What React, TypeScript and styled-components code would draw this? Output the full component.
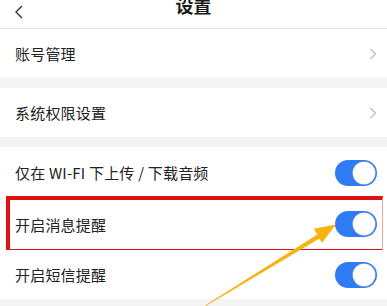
import React from "react"
import styled, { createGlobalStyle } from "styled-components"

const GlobalStyle = createGlobalStyle`
  html, body {
    margin: 0;
    padding: 0;
    background: #f4f4f4;
  }
  body {
    font-family: "Noto Sans CJK SC", "Noto Sans", sans-serif;
    overflow: hidden;
  }
`

const Page = styled.div`
  width: 387px;
  height: 306px;
  position: relative;
  overflow: hidden;
  background: #f4f4f4;
`

const Header = styled.div`
  height: 28px;
  background: #fff;
  border-bottom: 1px solid #e6e6e6;
  display: flex;
  justify-content: center;
  align-items: flex-start;
  position: relative;
`

const BackBtn = styled.div`
  position: absolute;
  left: 13px;
  top: 0;
  width: 14px;
  height: 14px;
`

const Title = styled.div`
  margin-top: -5px;
  font-size: 18px;
  line-height: 20px;
  font-weight: 700;
  color: #1a1a1a;
`

const Group = styled.div<{ gap?: number }>`
  background: #fff;
  margin-bottom: ${(p) => p.gap ?? 0}px;
`

const Row = styled.div<{ h: number }>`
  height: ${(p) => p.h}px;
  padding: 0 10px 0 15px;
  display: flex;
  align-items: center;
  justify-content: space-between;
  position: relative;
  background: #fff;
`

const Label = styled.span`
  font-size: 15px;
  color: #222;
  letter-spacing: 0.2px;
`

const Switch = styled.div<{ on?: boolean }>`
  width: 42px;
  height: 26px;
  border-radius: 13px;
  background: ${(p) => (p.on ? "#2f7bf5" : "#e5e5e5")};
  position: relative;
  &::after {
    content: "";
    position: absolute;
    top: 2px;
    ${(p) => (p.on ? "right: 2px;" : "left: 2px;")}
    width: 22px;
    height: 22px;
    border-radius: 50%;
    background: #fff;
    box-shadow: 0 0 0 0.5px #d0d0d0;
  }
`

const Highlight = styled.div`
  position: absolute;
  left: 6px;
  right: 4px;
  top: -2px;
  bottom: -3px;
  border: 4px solid #de1212;
  border-right: 1px solid #f3a0a0;
  pointer-events: none;
`

const ArrowLayer = styled.svg`
  position: absolute;
  left: 0;
  top: 0;
  pointer-events: none;
`

function Chevron() {
  return (
    <svg width="8" height="12" viewBox="0 0 8 12">
      <path d="M1.5 1 L6.5 6 L1.5 11" fill="none" stroke="#bdbdbd" strokeWidth="1.3" />
    </svg>
  )
}

export default function App() {
  return (
    <>
      <GlobalStyle />
      <Page>
        <Header>
          <BackBtn>
            <svg width="14" height="14" viewBox="0 0 14 14">
              <path d="M9 1 L3 7 L9 13" fill="none" stroke="#333" strokeWidth="1.4" />
            </svg>
          </BackBtn>
          <Title>设置</Title>
        </Header>
        <Group gap={10}>
          <Row h={49}>
            <Label>账号管理</Label>
            <Chevron />
          </Row>
        </Group>
        <Group gap={10}>
          <Row h={49}>
            <Label>系统权限设置</Label>
            <Chevron />
          </Row>
        </Group>
        <Group>
          <Row h={51}>
            <Label>仅在 WI-FI 下上传 / 下载音频</Label>
            <Switch on />
          </Row>
          <Row h={52}>
            <Label>开启消息提醒</Label>
            <Switch on />
            <Highlight />
          </Row>
          <Row h={49}>
            <Label>开启短信提醒</Label>
            <Switch on />
          </Row>
        </Group>
        <ArrowLayer width="387" height="306" viewBox="0 0 387 306">
          <polygon
            points="203.8,307.2 206.2,304.8 317.4,234.6 313.8,228.8 336,224.5 322.2,242.4 319.1,238.8"
            fill="#f7b30e"
          />
        </ArrowLayer>
      </Page>
    </>
  )
}
